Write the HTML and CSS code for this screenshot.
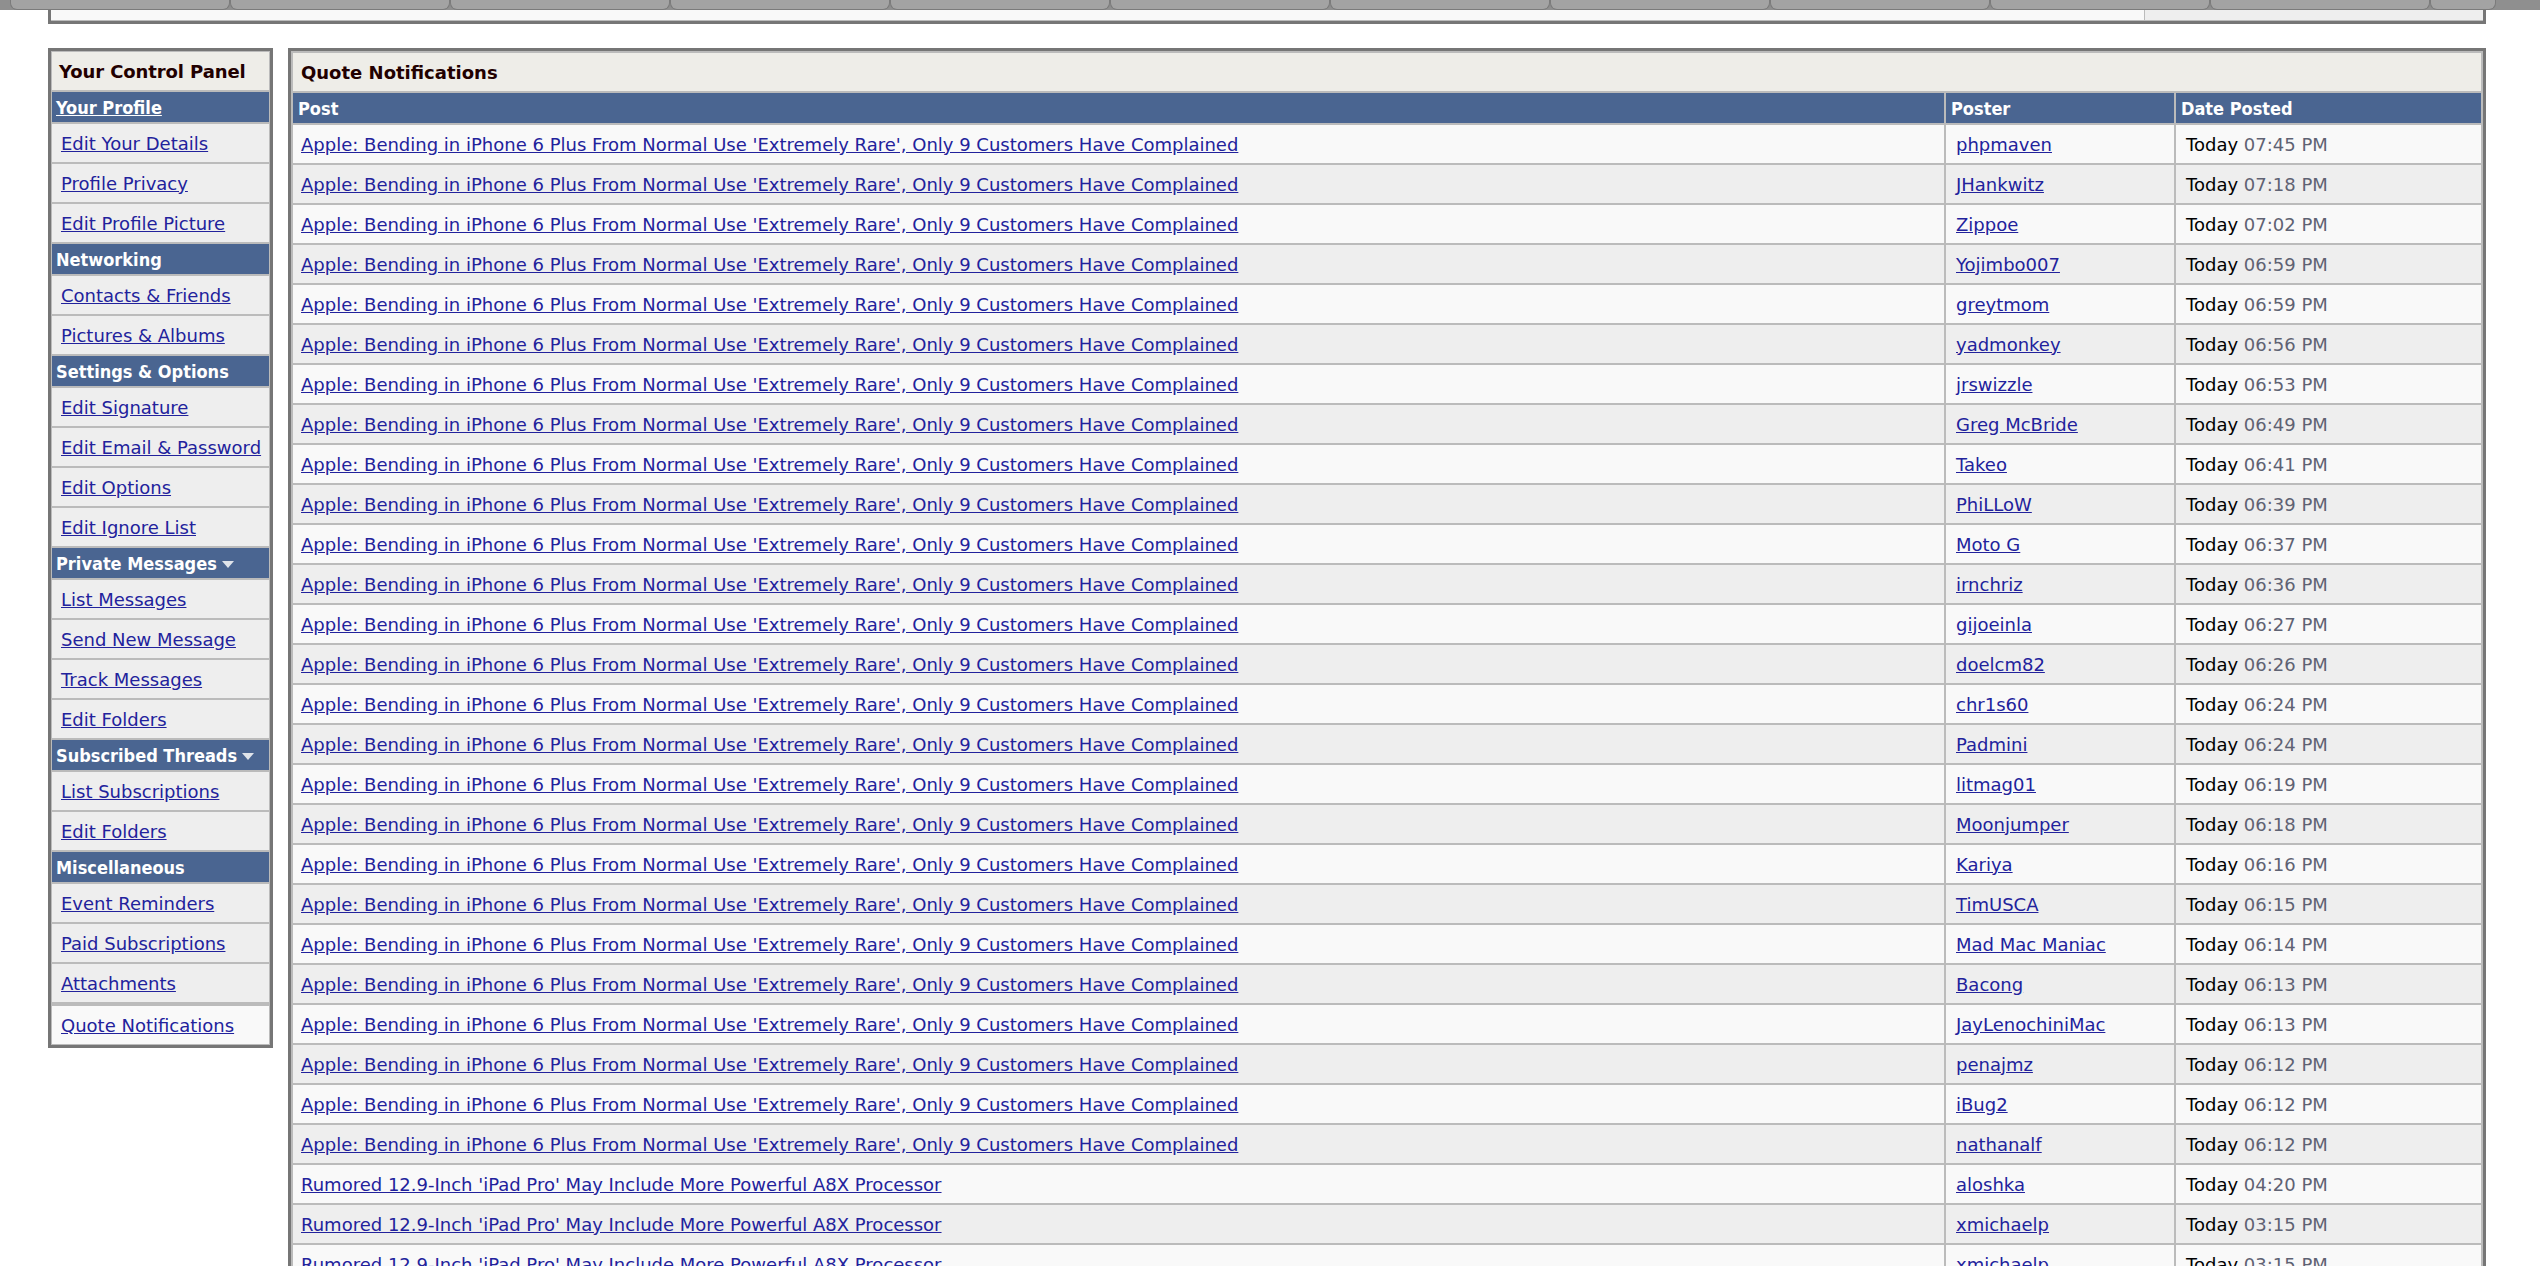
FILE: index.html
```html
<!DOCTYPE html>
<html lang="en">
<head>
  <meta charset="UTF-8" />
  <title>Quote Notifications</title>
  <link rel="stylesheet" href="styles.css">
</head>
<body>
  <!-- bottom edge of the nav tabs -->
  <div class="tabs">
    <div class="tab first"></div>
    <div class="tab"></div>
    <div class="tab"></div>
    <div class="tab"></div>
    <div class="tab"></div>
    <div class="tab"></div>
    <div class="tab"></div>
    <div class="tab"></div>
    <div class="tab"></div>
    <div class="tab"></div>
    <div class="tab"></div>
    <div class="tab last"></div>
  </div>

  <div class="topbox">
    <div class="topbox-inner">
      <div class="topbox-main"></div>
      <div class="topbox-side"></div>
    </div>
  </div>

  <div class="page">
    <!-- User CP menu -->
    <div class="cp">
      <div class="cp-title">Your Control Panel</div>

      <div class="cp-head"><a href="#">Your Profile</a></div>
      <div class="cp-item"><a href="#">Edit Your Details</a></div>
      <div class="cp-item"><a href="#">Profile Privacy</a></div>
      <div class="cp-item"><a href="#">Edit Profile Picture</a></div>

      <div class="cp-head">Networking</div>
      <div class="cp-item"><a href="#">Contacts &amp; Friends</a></div>
      <div class="cp-item"><a href="#">Pictures &amp; Albums</a></div>

      <div class="cp-head">Settings &amp; Options</div>
      <div class="cp-item"><a href="#">Edit Signature</a></div>
      <div class="cp-item"><a href="#">Edit Email &amp; Password</a></div>
      <div class="cp-item"><a href="#">Edit Options</a></div>
      <div class="cp-item"><a href="#">Edit Ignore List</a></div>

      <div class="cp-head">Private Messages <span class="arrow"></span></div>
      <div class="cp-item"><a href="#">List Messages</a></div>
      <div class="cp-item"><a href="#">Send New Message</a></div>
      <div class="cp-item"><a href="#">Track Messages</a></div>
      <div class="cp-item"><a href="#">Edit Folders</a></div>

      <div class="cp-head">Subscribed Threads <span class="arrow"></span></div>
      <div class="cp-item"><a href="#">List Subscriptions</a></div>
      <div class="cp-item"><a href="#">Edit Folders</a></div>

      <div class="cp-head">Miscellaneous</div>
      <div class="cp-item"><a href="#">Event Reminders</a></div>
      <div class="cp-item"><a href="#">Paid Subscriptions</a></div>
      <div class="cp-item"><a href="#">Attachments</a></div>
      <div class="cp-item current"><a href="#">Quote Notifications</a></div>
    </div>

    <!-- Quote list -->
    <div class="main">
      <table class="quotes">
        <thead>
          <tr><td class="tcat" colspan="3">Quote Notifications</td></tr>
          <tr>
            <th>Post</th>
            <th class="col-poster">Poster</th>
            <th class="col-date">Date Posted</th>
          </tr>
        </thead>
        <tbody>
          <tr><td><a href="#">Apple: Bending in iPhone 6 Plus From Normal Use 'Extremely Rare', Only 9 Customers Have Complained</a></td><td><a href="#">phpmaven</a></td><td>Today <span class="time">07:45 PM</span></td></tr>
          <tr><td><a href="#">Apple: Bending in iPhone 6 Plus From Normal Use 'Extremely Rare', Only 9 Customers Have Complained</a></td><td><a href="#">JHankwitz</a></td><td>Today <span class="time">07:18 PM</span></td></tr>
          <tr><td><a href="#">Apple: Bending in iPhone 6 Plus From Normal Use 'Extremely Rare', Only 9 Customers Have Complained</a></td><td><a href="#">Zippoe</a></td><td>Today <span class="time">07:02 PM</span></td></tr>
          <tr><td><a href="#">Apple: Bending in iPhone 6 Plus From Normal Use 'Extremely Rare', Only 9 Customers Have Complained</a></td><td><a href="#">Yojimbo007</a></td><td>Today <span class="time">06:59 PM</span></td></tr>
          <tr><td><a href="#">Apple: Bending in iPhone 6 Plus From Normal Use 'Extremely Rare', Only 9 Customers Have Complained</a></td><td><a href="#">greytmom</a></td><td>Today <span class="time">06:59 PM</span></td></tr>
          <tr><td><a href="#">Apple: Bending in iPhone 6 Plus From Normal Use 'Extremely Rare', Only 9 Customers Have Complained</a></td><td><a href="#">yadmonkey</a></td><td>Today <span class="time">06:56 PM</span></td></tr>
          <tr><td><a href="#">Apple: Bending in iPhone 6 Plus From Normal Use 'Extremely Rare', Only 9 Customers Have Complained</a></td><td><a href="#">jrswizzle</a></td><td>Today <span class="time">06:53 PM</span></td></tr>
          <tr><td><a href="#">Apple: Bending in iPhone 6 Plus From Normal Use 'Extremely Rare', Only 9 Customers Have Complained</a></td><td><a href="#">Greg McBride</a></td><td>Today <span class="time">06:49 PM</span></td></tr>
          <tr><td><a href="#">Apple: Bending in iPhone 6 Plus From Normal Use 'Extremely Rare', Only 9 Customers Have Complained</a></td><td><a href="#">Takeo</a></td><td>Today <span class="time">06:41 PM</span></td></tr>
          <tr><td><a href="#">Apple: Bending in iPhone 6 Plus From Normal Use 'Extremely Rare', Only 9 Customers Have Complained</a></td><td><a href="#">PhiLLoW</a></td><td>Today <span class="time">06:39 PM</span></td></tr>
          <tr><td><a href="#">Apple: Bending in iPhone 6 Plus From Normal Use 'Extremely Rare', Only 9 Customers Have Complained</a></td><td><a href="#">Moto G</a></td><td>Today <span class="time">06:37 PM</span></td></tr>
          <tr><td><a href="#">Apple: Bending in iPhone 6 Plus From Normal Use 'Extremely Rare', Only 9 Customers Have Complained</a></td><td><a href="#">irnchriz</a></td><td>Today <span class="time">06:36 PM</span></td></tr>
          <tr><td><a href="#">Apple: Bending in iPhone 6 Plus From Normal Use 'Extremely Rare', Only 9 Customers Have Complained</a></td><td><a href="#">gijoeinla</a></td><td>Today <span class="time">06:27 PM</span></td></tr>
          <tr><td><a href="#">Apple: Bending in iPhone 6 Plus From Normal Use 'Extremely Rare', Only 9 Customers Have Complained</a></td><td><a href="#">doelcm82</a></td><td>Today <span class="time">06:26 PM</span></td></tr>
          <tr><td><a href="#">Apple: Bending in iPhone 6 Plus From Normal Use 'Extremely Rare', Only 9 Customers Have Complained</a></td><td><a href="#">chr1s60</a></td><td>Today <span class="time">06:24 PM</span></td></tr>
          <tr><td><a href="#">Apple: Bending in iPhone 6 Plus From Normal Use 'Extremely Rare', Only 9 Customers Have Complained</a></td><td><a href="#">Padmini</a></td><td>Today <span class="time">06:24 PM</span></td></tr>
          <tr><td><a href="#">Apple: Bending in iPhone 6 Plus From Normal Use 'Extremely Rare', Only 9 Customers Have Complained</a></td><td><a href="#">litmag01</a></td><td>Today <span class="time">06:19 PM</span></td></tr>
          <tr><td><a href="#">Apple: Bending in iPhone 6 Plus From Normal Use 'Extremely Rare', Only 9 Customers Have Complained</a></td><td><a href="#">Moonjumper</a></td><td>Today <span class="time">06:18 PM</span></td></tr>
          <tr><td><a href="#">Apple: Bending in iPhone 6 Plus From Normal Use 'Extremely Rare', Only 9 Customers Have Complained</a></td><td><a href="#">Kariya</a></td><td>Today <span class="time">06:16 PM</span></td></tr>
          <tr><td><a href="#">Apple: Bending in iPhone 6 Plus From Normal Use 'Extremely Rare', Only 9 Customers Have Complained</a></td><td><a href="#">TimUSCA</a></td><td>Today <span class="time">06:15 PM</span></td></tr>
          <tr><td><a href="#">Apple: Bending in iPhone 6 Plus From Normal Use 'Extremely Rare', Only 9 Customers Have Complained</a></td><td><a href="#">Mad Mac Maniac</a></td><td>Today <span class="time">06:14 PM</span></td></tr>
          <tr><td><a href="#">Apple: Bending in iPhone 6 Plus From Normal Use 'Extremely Rare', Only 9 Customers Have Complained</a></td><td><a href="#">Bacong</a></td><td>Today <span class="time">06:13 PM</span></td></tr>
          <tr><td><a href="#">Apple: Bending in iPhone 6 Plus From Normal Use 'Extremely Rare', Only 9 Customers Have Complained</a></td><td><a href="#">JayLenochiniMac</a></td><td>Today <span class="time">06:13 PM</span></td></tr>
          <tr><td><a href="#">Apple: Bending in iPhone 6 Plus From Normal Use 'Extremely Rare', Only 9 Customers Have Complained</a></td><td><a href="#">penajmz</a></td><td>Today <span class="time">06:12 PM</span></td></tr>
          <tr><td><a href="#">Apple: Bending in iPhone 6 Plus From Normal Use 'Extremely Rare', Only 9 Customers Have Complained</a></td><td><a href="#">iBug2</a></td><td>Today <span class="time">06:12 PM</span></td></tr>
          <tr><td><a href="#">Apple: Bending in iPhone 6 Plus From Normal Use 'Extremely Rare', Only 9 Customers Have Complained</a></td><td><a href="#">nathanalf</a></td><td>Today <span class="time">06:12 PM</span></td></tr>
          <tr><td><a href="#">Rumored 12.9-Inch 'iPad Pro' May Include More Powerful A8X Processor</a></td><td><a href="#">aloshka</a></td><td>Today <span class="time">04:20 PM</span></td></tr>
          <tr><td><a href="#">Rumored 12.9-Inch 'iPad Pro' May Include More Powerful A8X Processor</a></td><td><a href="#">xmichaelp</a></td><td>Today <span class="time">03:15 PM</span></td></tr>
          <tr><td><a href="#">Rumored 12.9-Inch 'iPad Pro' May Include More Powerful A8X Processor</a></td><td><a href="#">xmichaelp</a></td><td>Today <span class="time">03:15 PM</span></td></tr>
        </tbody>
      </table>
    </div>
  </div>
</body>
</html>
```

FILE: styles.css
```css
* {
  margin: 0;
  padding: 0;
  box-sizing: border-box;
}

body {
  font-family: "DejaVu Sans", Verdana, sans-serif;
  font-size: 18px;
  background-color: #fff;
  color: #000;
}

a {
  color: #22229c;
}

/* nav tabs, only their lower edge shows */
.tabs {
  display: flex;
  height: 10px;
  background-color: #8f8f8f;
  overflow: hidden;
}

.tab {
  flex: 0 0 220px;
  height: 10px;
  background-color: #a3a3a3;
  border: 1px solid #7b7b7b;
  border-top: none;
  border-radius: 0 0 7px 7px;
}

.tab.first {
  flex-basis: 220px;
  margin-left: 10px;
}

.tab.last {
  flex-basis: 66px;
}

.topbox {
  margin: 0 54px 0 48px;
  border: 3px solid #767676;
  border-top: none;
  padding-bottom: 1px;
  background-color: #bbb;
}

.topbox-inner {
  display: flex;
  height: 10px;
}

.topbox-main {
  flex: 1;
  background-color: #f9f9f9;
}

.topbox-side {
  width: 339px;
  background-color: #eee;
  border-left: 1px solid #bbb;
}

.page {
  display: flex;
  align-items: flex-start;
  gap: 15px;
  margin: 24px 54px 0 48px;
}

/* control panel */
.cp {
  flex: 0 0 225px;
  display: flex;
  flex-direction: column;
  gap: 2px;
  padding: 1px;
  border: 3px solid #767676;
  background-color: #bbb;
}

.cp-title,
.tcat {
  height: 38px;
  background-color: #eeede8;
  color: #200;
  font-weight: bold;
  font-size: 18px;
}

.cp-title {
  display: flex;
  align-items: center;
  padding-left: 7px;
  letter-spacing: -0.1px;
}

.cp-head,
.quotes th {
  height: 30px;
  background-color: #4a6591;
  color: #fff;
  font-family: "DejaVu Sans Condensed", "DejaVu Sans", sans-serif;
  font-stretch: condensed;
  font-weight: bold;
  font-size: 18px;
}

.cp-head {
  display: flex;
  align-items: center;
  padding-left: 4px;
}

.cp-head a {
  color: #fff;
}

.arrow {
  display: inline-block;
  margin-left: 5px;
  margin-top: 3px;
  border-left: 6px solid transparent;
  border-right: 6px solid transparent;
  border-top: 7px solid #dfe3ea;
}

.cp-item {
  display: flex;
  align-items: center;
  height: 38px;
  padding-left: 9px;
  background-color: #eee;
}

.cp-item.current {
  margin-top: 2px;
  background-color: #f9f9f9;
}

/* quote list */
.main {
  flex: 1;
}

.quotes {
  width: 100%;
  border: 3px solid #767676;
  border-spacing: 2px;
  background-color: #bbb;
}

.quotes td {
  height: 38px;
  padding: 0 10px;
  white-space: nowrap;
}

.quotes td:first-child {
  padding-left: 8px;
}

.quotes .tcat {
  padding-left: 9px;
}

.quotes th {
  text-align: left;
  padding: 0 5px;
}

.quotes .col-poster {
  width: 228px;
}

.quotes .col-date {
  width: 305px;
}

.quotes tbody tr:nth-child(odd) td {
  background-color: #f9f9f9;
}

.quotes tbody tr:nth-child(even) td {
  background-color: #eee;
}

.time {
  color: #5f6273;
}
```
